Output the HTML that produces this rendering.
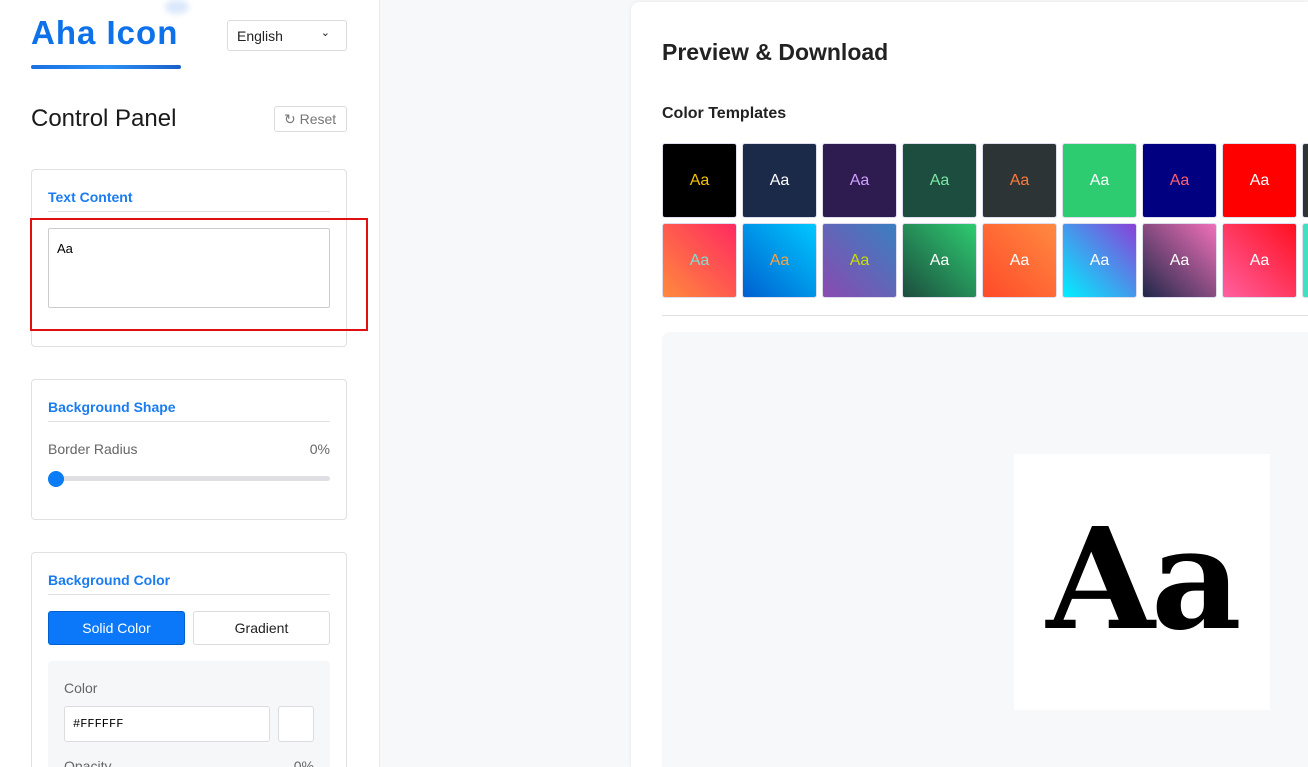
<!DOCTYPE html>
<html style="width:1308px;height:767px;overflow:hidden"><head><meta charset="utf-8"><style>
*{box-sizing:border-box;margin:0;padding:0}
body{width:1308px;height:767px;overflow:hidden;background:#f7f8fa;font-family:"Liberation Sans",sans-serif;position:relative}
.side{position:absolute;left:0;top:0;width:380px;height:767px;background:#fff;border-right:1px solid #e8e8ec;overflow:hidden}
.abs{position:absolute}
.card{position:absolute;left:31px;width:316px;border:1px solid #e0e0e4;border-radius:4px;background:#fff}
.ct{position:absolute;left:16px;font-size:14px;font-weight:bold;color:#1a7cf0}
.hr{position:absolute;left:16px;right:16px;height:1px;background:#e0e0e4}
.main{position:absolute;left:631px;top:2px;width:677px;height:765px;background:#fff;border-radius:8px 0 0 0;box-shadow:0 0 4px rgba(0,0,0,.08);overflow:hidden}
.sw{position:absolute;width:75px;height:75px;border-radius:3px;border:1px solid #dde;color:#fff;font-size:16px;display:flex;align-items:center;justify-content:center}
</style></head><body>
<div class="side">
 <div class="abs" style="left:165px;top:0;width:24px;height:14px;border-radius:50%;background:#dbe8fb;filter:blur(3px)"></div>
 <div class="abs" style="left:31px;top:14px;font-size:33px;font-weight:bold;color:#0d72ea;letter-spacing:1px">Aha Icon</div>
 <div class="abs" style="left:31px;top:65px;width:150px;height:4px;border-radius:2px;background:linear-gradient(90deg,#1a6fe0,#2a90f5,#1a5fc8)"></div>
 <div class="abs" style="left:227px;top:20px;width:120px;height:31px;border:1px solid #dcdce0;border-radius:3px;font-size:14px;color:#222;padding:7px 9px">English<span style="position:absolute;right:16px;top:5px;font-size:11px">⌄</span></div>
 <div class="abs" style="left:31px;top:105px;font-size:24px;color:#1a1a1a">Control Panel</div>
 <div class="abs" style="left:274px;top:106px;width:73px;height:26px;border:1px solid #dcdce0;border-radius:3px;font-size:14px;color:#777;padding:4px 0 0 9px">↻ Reset</div>

 <div class="card" style="top:169px;height:178px">
  <div class="ct" style="top:19px">Text Content</div>
  <div class="hr" style="top:41px"></div>
  <div class="abs" style="left:16px;top:58px;width:282px;height:80px;border:1px solid #ccc;border-radius:2px;font-size:13px;padding:12px 8px">Aa</div>
 </div>
 <div class="abs" style="left:30px;top:218px;width:338px;height:113px;border:2px solid #e01010"></div>

 <div class="card" style="top:379px;height:141px">
  <div class="ct" style="top:19px">Background Shape</div>
  <div class="hr" style="top:41px"></div>
  <div class="abs" style="left:16px;top:61px;font-size:14px;color:#666">Border Radius</div>
  <div class="abs" style="right:16px;top:61px;font-size:14px;color:#666">0%</div>
  <div class="abs" style="left:16px;top:96px;width:282px;height:5px;border-radius:3px;background:#dfdfe3"></div>
  <div class="abs" style="left:16px;top:91px;width:16px;height:16px;border-radius:50%;background:#0a7cf5"></div>
 </div>

 <div class="card" style="top:552px;height:240px">
  <div class="ct" style="top:19px">Background Color</div>
  <div class="hr" style="top:41px"></div>
  <div class="abs" style="left:16px;top:58px;width:137px;height:34px;background:#0a78f8;border:1px solid #0060d0;border-radius:3px;color:#fff;font-size:14px;text-align:center;line-height:32px">Solid Color</div>
  <div class="abs" style="left:161px;top:58px;width:137px;height:34px;border:1px solid #dcdce0;border-radius:3px;color:#222;font-size:14px;text-align:center;line-height:32px">Gradient</div>
  <div class="abs" style="left:16px;top:108px;width:282px;height:140px;background:#f6f7f9;border-radius:4px">
   <div class="abs" style="left:16px;top:19px;font-size:14px;color:#666">Color</div>
   <div class="abs" style="left:16px;top:45px;width:206px;height:36px;background:#fff;border:1px solid #dcdce0;border-radius:3px;font-family:'Liberation Mono',monospace;font-size:12px;padding:10px 8px">#FFFFFF</div>
   <div class="abs" style="left:230px;top:45px;width:36px;height:36px;background:#fff;border:1px solid #dcdce0;border-radius:3px"></div>
   <div class="abs" style="left:16px;top:97px;font-size:14px;color:#666">Opacity</div>
   <div class="abs" style="right:16px;top:97px;font-size:14px;color:#666">0%</div>
  </div>
 </div>
</div>

<div class="main">
 <div class="abs" style="left:31px;top:37px;font-size:23px;font-weight:bold;color:#222">Preview &amp; Download</div>
 <div class="abs" style="left:31px;top:103px;font-size:16px;font-weight:bold;color:#222">Color Templates</div>
 <div class="sw" style="left:31px;top:141px;background:#000;color:#f5c400">Aa</div>
 <div class="sw" style="left:111px;top:141px;background:#1c2a4a">Aa</div>
 <div class="sw" style="left:191px;top:141px;background:#2e1b4f;color:#d0a0ff">Aa</div>
 <div class="sw" style="left:271px;top:141px;background:#1c4d3e;color:#7de8a8">Aa</div>
 <div class="sw" style="left:351px;top:141px;background:#2d3436;color:#ff7a3a">Aa</div>
 <div class="sw" style="left:431px;top:141px;background:#2ecc71">Aa</div>
 <div class="sw" style="left:511px;top:141px;background:#000080;color:#ff6070">Aa</div>
 <div class="sw" style="left:591px;top:141px;background:#ff0000">Aa</div>
 <div class="sw" style="left:671px;top:141px;background:#2d3436">Aa</div>
 <div class="sw" style="left:31px;top:221px;background:linear-gradient(45deg,#ff8a3d,#ff2a60);color:#7fe0d0">Aa</div>
 <div class="sw" style="left:111px;top:221px;background:linear-gradient(45deg,#0060d0,#00c8ff);color:#ffa040">Aa</div>
 <div class="sw" style="left:191px;top:221px;background:linear-gradient(45deg,#8a4ab0,#3a80c0);color:#c8e000">Aa</div>
 <div class="sw" style="left:271px;top:221px;background:linear-gradient(45deg,#1c4d3e,#2ecc71)">Aa</div>
 <div class="sw" style="left:351px;top:221px;background:linear-gradient(45deg,#ff4a2a,#ff8a40)">Aa</div>
 <div class="sw" style="left:431px;top:221px;background:linear-gradient(45deg,#00f0ff,#8a40d8)">Aa</div>
 <div class="sw" style="left:511px;top:221px;background:linear-gradient(45deg,#20284a,#f070b8)">Aa</div>
 <div class="sw" style="left:591px;top:221px;background:linear-gradient(45deg,#ff60a0,#ff1020)">Aa</div>
 <div class="sw" style="left:671px;top:221px;background:#40e0c0">Aa</div>
 <div class="abs" style="left:31px;top:313px;width:680px;height:1px;background:#e0e0e4"></div>
 <div class="abs" style="left:31px;top:330px;width:700px;height:500px;background:#f7f8fa;border-radius:8px"></div>
 <div class="abs" style="left:383px;top:452px;width:256px;height:256px;background:#fff;display:flex;align-items:center;justify-content:center;font-family:'DejaVu Serif','Liberation Serif',serif;font-weight:bold;font-size:140px;color:#000;letter-spacing:-4px;padding-bottom:4px">Aa</div>
</div>
</body></html>
